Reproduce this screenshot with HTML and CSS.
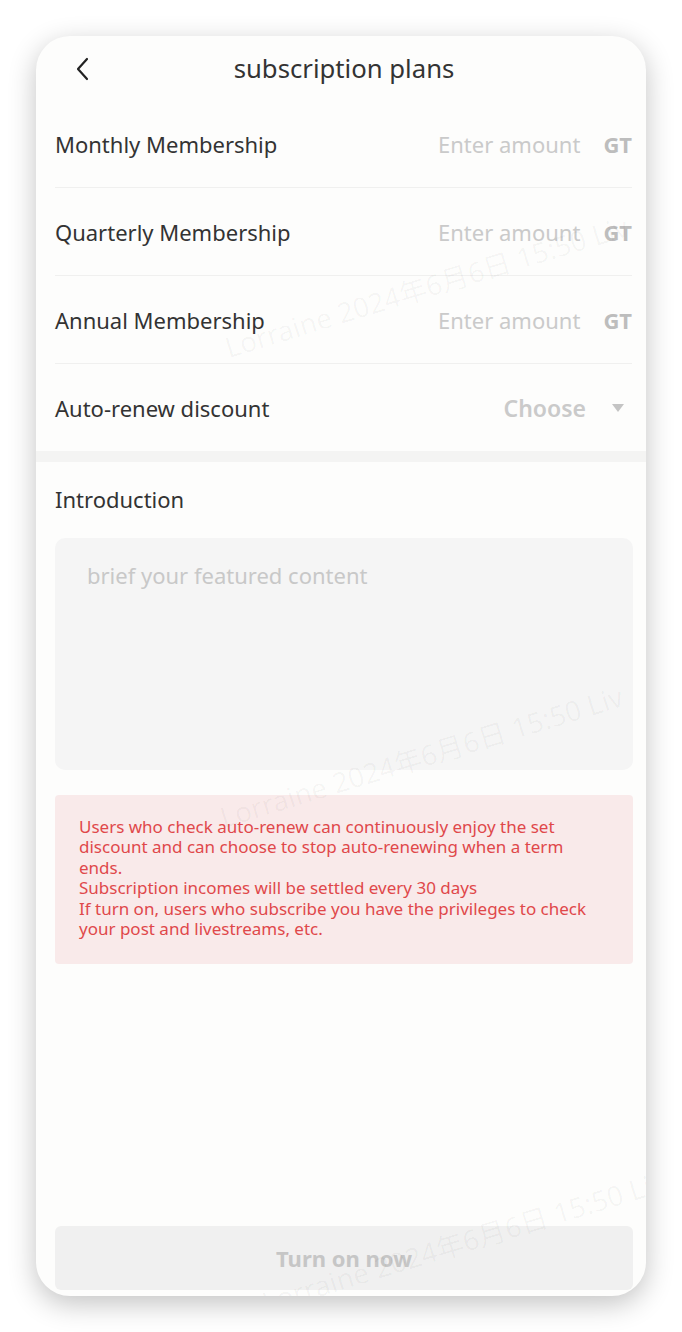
FILE: index.html
```html
<!DOCTYPE html>
<html lang="en">
<head>
  <meta charset="UTF-8">
  <title>subscription plans</title>
  <link rel="stylesheet" href="styles.css">
</head>
<body>
  <div class="phone">
    <div class="header">
      <span class="back">
        <svg width="16" height="24" viewBox="0 0 16 24"><path d="M12 2 L3 12 L12 22" fill="none" stroke="#222" stroke-width="2.2" stroke-linecap="round" stroke-linejoin="round"/></svg>
      </span>
      <span class="title">subscription plans</span>
    </div>

    <div class="plans">
      <div class="row">
        <span class="label">Monthly Membership</span>
        <span class="value"><span class="placeholder">Enter amount</span><b class="unit">GT</b></span>
      </div>
      <div class="row">
        <span class="label">Quarterly Membership</span>
        <span class="value"><span class="placeholder">Enter amount</span><b class="unit">GT</b></span>
      </div>
      <div class="row">
        <span class="label">Annual Membership</span>
        <span class="value"><span class="placeholder">Enter amount</span><b class="unit">GT</b></span>
      </div>
      <div class="row">
        <span class="label">Auto-renew discount</span>
        <span class="value"><span class="choose">Choose</span><span class="caret"></span></span>
      </div>
    </div>

    <div class="band"></div>

    <div class="intro">
      <div class="label">Introduction</div>
      <div class="textbox">brief your featured content</div>
      <div class="notice">
        Users who check auto-renew can continuously enjoy the set discount and can choose to stop auto-renewing when a term ends.<br>
        Subscription incomes will be settled every 30 days<br>
        If turn on, users who subscribe you have the privileges to check your post and livestreams, etc.
      </div>
    </div>

    <button class="submit">Turn on now</button>

    <span class="mark mark1">Lorraine 2024年6月6日 15:50 Liv</span>
    <span class="mark mark2">Lorraine 2024年6月6日 15:50 Liv</span>
    <span class="mark mark3">Lorraine 2024年6月6日 15:50 Liv</span>
  </div>
</body>
</html>
```

FILE: styles.css
```css
body {
  margin: 0;
  background: #fff;
  font-family: "Noto Sans", "Noto Sans CJK SC", sans-serif;
  color: #333;
}
.phone {
  position: relative;
  margin: 36px;
  width: 610px;
  height: 1260px;
  background: #fdfdfc;
  border-radius: 34px;
  box-shadow: 0 8px 28px rgba(0, 0, 0, 0.24);
  overflow: hidden;
  display: flex;
  flex-direction: column;
}
.header {
  height: 64px;
  display: flex;
  align-items: center;
  justify-content: center;
  position: relative;
}
.back {
  position: absolute;
  left: 39px;
  top: 21px;
}
.title {
  font-size: 25.7px;
  color: #333;
  margin-left: 6px;
}
.plans {
  padding: 0 14px 0 19px;
}
.row {
  height: 87px;
  display: flex;
  align-items: center;
  justify-content: space-between;
  border-bottom: 1px solid #f0f0ef;
}
.row:last-child {
  border-bottom: none;
}
.label {
  font-size: 22px;
  color: #333;
}
.value {
  display: flex;
  align-items: center;
}
.placeholder {
  font-size: 22px;
  color: #cacaca;
}
.unit {
  font-size: 22px;
  color: #bdbdbd;
  margin-left: 23px;
}
.choose {
  font-size: 23px;
  font-weight: 600;
  color: #cacaca;
}
.caret {
  width: 0;
  height: 0;
  border-left: 6px solid transparent;
  border-right: 6px solid transparent;
  border-top: 8px solid #c4c4c4;
  margin-left: 26px;
  margin-right: 8px;
}
.band {
  height: 11px;
  background: #f4f4f3;
}
.intro {
  padding: 21px 13px 0 19px;
}
.intro .label {
  line-height: 32px;
}
.textbox {
  margin-top: 23px;
  height: 232px;
  box-sizing: border-box;
  padding: 22px 32px;
  background: #f5f5f5;
  border-radius: 10px;
  font-size: 22px;
  color: #c8c8c8;
}
.notice {
  margin-top: 25px;
  height: 169px;
  box-sizing: border-box;
  padding: 22px 40px 22px 24px;
  background: #f9eaea;
  border-radius: 4px;
  font-size: 17px;
  line-height: 20.4px;
  color: #e0484a;
}
.submit {
  margin: auto 13px 6px 19px;
  height: 64px;
  border: none;
  border-radius: 6px;
  background: #f0f0f0;
  color: #c6c6c6;
  font-family: inherit;
  font-size: 22px;
  font-weight: 700;
}
.mark {
  position: absolute;
  font-size: 28px;
  color: rgba(0, 0, 0, 0.035);
  white-space: nowrap;
  transform: rotate(-17deg);
  transform-origin: left bottom;
  pointer-events: none;
}
.mark1 {
  left: 195px;
  top: 290px;
}
.mark2 {
  left: 190px;
  top: 760px;
}
.mark3 {
  left: 232px;
  top: 1245px;
}
```
